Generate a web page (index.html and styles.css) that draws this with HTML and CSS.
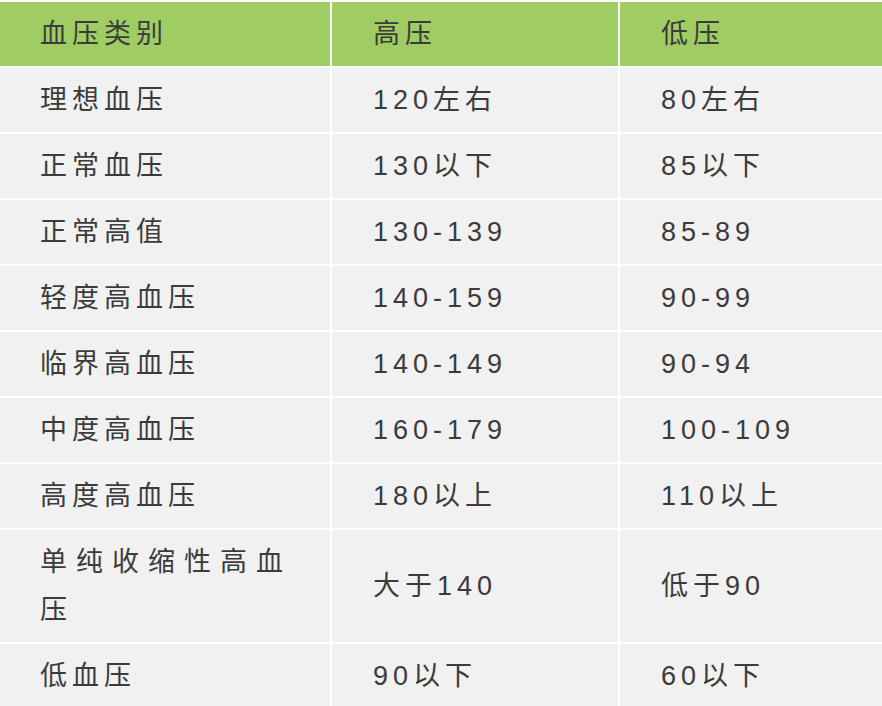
FILE: index.html
```html
<!DOCTYPE html>
<html lang="zh">
<head>
<meta charset="utf-8">
<link rel="stylesheet" href="styles.css">
</head>
<body>
<div class="table">
  <div class="cell head">血压类别</div><div class="cell head">高压</div><div class="cell head">低压</div>
  <div class="cell">理想血压</div><div class="cell">120左右</div><div class="cell">80左右</div>
  <div class="cell">正常血压</div><div class="cell">130以下</div><div class="cell">85以下</div>
  <div class="cell">正常高值</div><div class="cell">130-139</div><div class="cell">85-89</div>
  <div class="cell">轻度高血压</div><div class="cell">140-159</div><div class="cell">90-99</div>
  <div class="cell">临界高血压</div><div class="cell">140-149</div><div class="cell">90-94</div>
  <div class="cell">中度高血压</div><div class="cell">160-179</div><div class="cell">100-109</div>
  <div class="cell">高度高血压</div><div class="cell">180以上</div><div class="cell">110以上</div>
  <div class="cell justify">单纯收缩性高血压</div><div class="cell">大于140</div><div class="cell">低于90</div>
  <div class="cell">低血压</div><div class="cell">90以下</div><div class="cell">60以下</div>
</div>
</body>
</html>
```
FILE: styles.css
```css
html, body {
  margin: 0;
  padding: 0;
  background: #ffffff;
}
body {
  width: 882px;
  height: 706px;
  overflow: hidden;
}
.table {
  display: grid;
  grid-template-columns: 330px 286px 1fr;
  gap: 2px;
  padding-top: 2px;
  font-family: "Liberation Sans", "Noto Sans CJK SC", sans-serif;
  font-size: 27px;
  letter-spacing: 5px;
  color: #3b3b3b;
}
.cell {
  background: #f1f1f1;
  padding: 8px 42px 8px 40px;
  line-height: 48px;
  display: flex;
  align-items: center;
}
.cell:nth-child(3n+2), .cell:nth-child(3n) {
  padding-left: 41px;
}
.head {
  background: #a0cc64;
}
.justify {
  display: block;
  text-align: justify;
}
```
